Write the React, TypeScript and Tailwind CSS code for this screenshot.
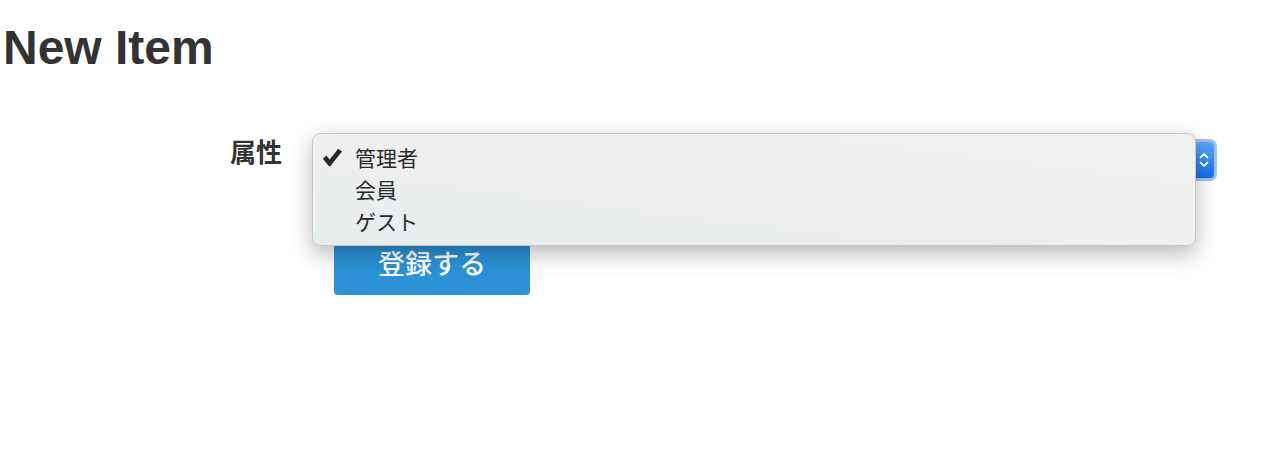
import React from "react";

export default function App() {
  const items = ["管理者", "会員", "ゲスト"];
  return (
    <div className="relative w-[1284px] h-[476px] bg-white overflow-hidden text-[#333]">
      <div className="pt-[21px] pl-[3px]">
        <h1 className="text-[48px] font-bold leading-[53px]" style={{ fontFamily: '"Liberation Sans", Arial, sans-serif' }}>
          New Item
        </h1>
      </div>

      <div className="mt-[67px] flex" style={{ fontFamily: '"Noto Sans CJK JP", sans-serif' }}>
        <div className="w-[282px] text-right text-[26px] font-bold leading-[20px]">属性</div>
        <div className="ml-[52px] w-[881px] h-[38px] rounded-[5px] border border-[#b9b9b9] bg-white ring-[2px] ring-[#9cc6f7] flex justify-end">
          <div className="w-[20px] h-full rounded-r-[4px] bg-gradient-to-b from-[#5ba7fb] to-[#0f6ff0] flex items-center justify-center">
            <svg width="12" height="24" viewBox="0 0 12 24" fill="none" stroke="white" strokeWidth="1.8" strokeLinecap="round" strokeLinejoin="round">
              <path d="M2.5 9.5 L6 6 L9.5 9.5" />
              <path d="M2.5 14.5 L6 18 L9.5 14.5" />
            </svg>
          </div>
        </div>
      </div>

      <div className="mt-[50px] ml-[334px]" style={{ fontFamily: '"Noto Sans CJK JP", sans-serif' }}>
        <button className="w-[196px] h-[66px] rounded-[4px] bg-[#2b92d5] text-white text-[27px] font-medium leading-none flex items-center justify-center">
          登録する
        </button>
      </div>

      <div
        className="absolute left-[312px] top-[133px] w-[884px] h-[113px] rounded-[8px] border border-[#c6c6c6] bg-gradient-to-tr from-[#e7eded] via-[#efefef] to-[#f0f0f0] shadow-[0_8px_22px_rgba(0,0,0,0.28)] pt-[7px]"
        style={{ fontFamily: '"Noto Sans CJK JP", sans-serif' }}
      >
        {items.map((t, i) => (
          <div key={t} className="h-[32px] flex items-center text-[21px] text-[#2a2a2a] leading-none">
            <div className="w-[42px] pl-[9px] flex items-center">
              {i === 0 && (
                <svg width="21" height="19" viewBox="0 0 22 20">
                  <path d="M0.8 11.2 L4.6 7.8 L8 12 L17 0.8 L21 3.8 L8.6 19.2 L7.2 19.2 Z" fill="#2a2a2a" />
                </svg>
              )}
            </div>
            <div>{t}</div>
          </div>
        ))}
      </div>
    </div>
  );
}
